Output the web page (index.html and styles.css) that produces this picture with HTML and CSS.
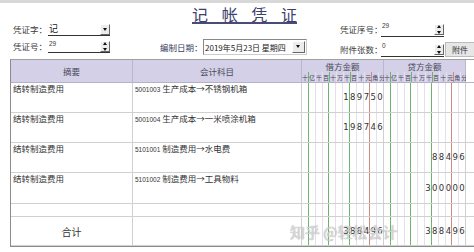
FILE: index.html
```html
<!DOCTYPE html>
<html lang="zh-CN">
<head>
<meta charset="UTF-8">
<title>记帐凭证</title>
<link rel="stylesheet" href="styles.css">
</head>
<body>
<div class="topbar"></div>

<div class="head">
    <!-- 左边：凭证字 / 凭证号 -->
    <div class="col-left">
        <div class="field">
            <label>凭证字：</label>
            <div class="combo"><span class="val big">记</span><i class="btn drop"></i></div>
        </div>
        <div class="field">
            <label>凭证号：</label>
            <div class="combo"><span class="val">29</span><i class="btn spin"></i></div>
        </div>
    </div>

    <!-- 中间：标题 + 日期 -->
    <div class="col-mid">
        <h1 class="title"><span>记</span><span>帐</span><span>凭</span><span>证</span></h1>
        <div class="field date-field">
            <label>编制日期：</label>
            <div class="select">2019年5月23日&nbsp;星期四<i class="btn drop"></i></div>
        </div>
    </div>

    <!-- 右边：凭证序号 / 附件张数 -->
    <div class="col-right">
        <div class="field">
            <label>凭证序号：</label>
            <div class="combo wide"><span class="val">29</span><i class="btn spin"></i></div>
        </div>
        <div class="field">
            <label>附件张数：</label>
            <div class="combo wide"><span class="val">0</span><i class="btn spin"></i></div>
            <button class="attach">附件</button>
        </div>
    </div>
</div>

<div class="voucher">
    <div class="th">摘要</div>
    <div class="th">会计科目</div>
    <div class="th amt-head">
        <div class="amt-title">借方金额</div>
        <div class="amt units"></div>
    </div>
    <div class="th amt-head">
        <div class="amt-title">贷方金额</div>
        <div class="amt units"></div>
    </div>
    <div class="th edge"></div>

    <div class="td">结转制造费用</div>
    <div class="td"><small>5001003</small> 生产成本→不锈钢机箱</div>
    <div class="td amt" data-v="189750"></div>
    <div class="td amt" data-v=""></div>
    <div class="td edge"></div>

    <div class="td">结转制造费用</div>
    <div class="td"><small>5001004</small> 生产成本→一米喷涂机箱</div>
    <div class="td amt" data-v="198746"></div>
    <div class="td amt" data-v=""></div>
    <div class="td edge"></div>

    <div class="td">结转制造费用</div>
    <div class="td"><small>5101001</small> 制造费用→水电费</div>
    <div class="td amt" data-v=""></div>
    <div class="td amt" data-v="88496"></div>
    <div class="td edge"></div>

    <div class="td">结转制造费用</div>
    <div class="td"><small>5101002</small> 制造费用→工具物料</div>
    <div class="td amt" data-v=""></div>
    <div class="td amt" data-v="300000"></div>
    <div class="td edge"></div>

    <div class="td"></div>
    <div class="td"></div>
    <div class="td amt" data-v=""></div>
    <div class="td amt" data-v=""></div>
    <div class="td edge"></div>

    <div class="td total">合计</div>
    <div class="td"></div>
    <div class="td amt" data-v="388496"></div>
    <div class="td amt" data-v="388496"></div>
    <div class="td edge"></div>
</div>

<div class="watermark">知乎 @轻松会计</div>

<script>
/* 金额格子：12 位，右对齐 */
const units = '十亿千百十万千百十元角分';
document.querySelectorAll('.amt.units').forEach(el => {
    [...units].forEach(u => {
        const s = document.createElement('span');
        s.textContent = u;
        el.appendChild(s);
    });
});
document.querySelectorAll('.amt[data-v]').forEach(el => {
    const v = el.dataset.v;
    const pad = 12 - v.length;
    for (let i = 0; i < 12; i++) {
        const s = document.createElement('span');
        s.textContent = i >= pad ? v[i - pad] : '';
        el.appendChild(s);
    }
});
</script>
</body>
</html>
```

FILE: styles.css
```css
body {
    margin: 0; width: 474px; height: 252px; overflow: hidden;
    position: relative; background: #fff; color: #3a3a3a;
    font-family: "Noto Sans CJK SC", "Liberation Sans", sans-serif;
}
.topbar { height: 3px; background: #d8d8d8; }

/* ---------- kop ---------- */
.head {
    display: grid; grid-template-columns: 160px 170px 1fr;
    height: 56px;
}
.field { display: flex; align-items: center; }
.field label { font-size: 8.5px; line-height: 13px; white-space: nowrap; }

.col-left {
    display: flex; flex-direction: column; gap: 4px;
    padding: 20px 0 0 13px;
}
.col-left .field { height: 13px; }
.col-left label { width: 35px; }

.combo {
    box-sizing: border-box; width: 62px; height: 13px;
    display: flex; align-items: center; justify-content: space-between;
    border-bottom: 1px solid #333; padding-left: 1px;
}
.combo.wide { width: 63px; height: 15px; }
.val { font-size: 6.5px; line-height: 8px; align-self: flex-start; font-family: "Liberation Sans", sans-serif; }
.val.big { font-size: 9px; line-height: 11px; font-family: "Noto Sans CJK SC", sans-serif; color: #222; }

.btn {
    box-sizing: border-box; width: 10px; height: 11px; position: relative;
    background: #ececec; border: 1px solid; border-color: #fff #666 #666 #fff;
}
.btn.drop::after {
    content: ""; position: absolute; left: 2px; top: 3px;
    border: 2.5px solid transparent; border-top: 3px solid #111; border-bottom: 0;
}
.btn.spin::before, .btn.spin::after {
    content: ""; position: absolute; left: 2px;
    border: 2.5px solid transparent;
}
.btn.spin::before { top: 0; border-bottom: 3px solid #111; border-top: 0; }
.btn.spin::after { bottom: 0; border-top: 3px solid #111; border-bottom: 0; }

.col-mid { padding-top: 4px; }
.title {
    display: flex; justify-content: space-between;
    width: 105px; margin: 0 0 0 32px;
    font-size: 16px; line-height: 15px; font-weight: 400; color: #3d3f6e;
    border-bottom: 2px solid #4a4c78;
}
.date-field { margin-top: 15px; }
.date-field label { width: 43px; color: #34405e; }
.select {
    box-sizing: border-box; width: 104px; height: 16px;
    display: flex; align-items: center; justify-content: space-between;
    border: 1px solid #888; border-right-color: #ccc; border-bottom-color: #ccc;
    padding-left: 1px; font-size: 8px; color: #222; white-space: nowrap;
}
.select .btn { width: 13px; height: 12px; margin-right: 1px; }
.select .btn.drop::after { left: 3px; }

.col-right {
    display: flex; flex-direction: column; gap: 5px;
    padding: 19px 0 0 10px;
}
.col-right .field { height: 15px; }
.col-right label { width: 41px; }
.attach {
    box-sizing: border-box; height: 15px; width: 30px; margin-left: 1px; padding: 0;
    background: #e6e6e6; border: 1px solid #bbb; color: #333;
    font-family: "Noto Sans CJK SC", sans-serif; font-size: 8px;
}

/* ---------- tabel ---------- */
.voucher {
    display: grid; margin-left: 10px;
    grid-template-columns: 122px 169px 82px 82px 1fr;
    grid-template-rows: 23px 30px 30px 30px 31px 13px 29px;
    border-left: 1px solid #8c8c8c; border-top: 1px solid #a0a0a0;
    border-bottom: 1px solid #8c8c8c;
}
.th, .td { box-sizing: border-box; border-bottom: 1px solid #d0d0d0; border-right: 1px solid #d0d0d0; }
.th {
    background: #d3d0e7; color: #4a4a5a; font-size: 8.5px;
    display: flex; align-items: center; justify-content: center;
    border-right-color: #bab6cf; border-bottom-color: #b5b1c9;
}
.td { font-size: 8.5px; line-height: 11px; padding: 0 2px; color: #333; }
.td small { font-family: "Liberation Sans", sans-serif; font-size: 6.5px; }
.td.total { display: flex; align-items: center; justify-content: center; font-size: 10px; }
.edge { border-right: 0; }
.th.edge { background: #fff; }

.amt-head { flex-direction: column; align-items: stretch; justify-content: flex-start; }
.amt-title { height: 12px; line-height: 13px; text-align: center; }
.amt {
    display: grid; grid-template-columns: repeat(12, 1fr);
    padding: 0; border-right: 0;
}
.amt span {
    display: flex; align-items: center; justify-content: center;
    border-right: 1px solid #e4e0ea;
    font-family: "DejaVu Sans", sans-serif; font-size: 8.5px; color: #333;
}
.amt span:nth-child(1), .amt span:nth-child(4), .amt span:nth-child(7) { border-right-color: #6db56d; }
.amt span:nth-child(10) { border-right-color: #cf8a80; }
.amt span:nth-child(12) { border-right-color: #cfcfcf; }
.amt.units { height: 11px; }
.amt.units span { font-family: "Noto Sans CJK SC", sans-serif; font-size: 6px; color: #4a4a5a; }

.watermark {
    position: absolute; left: 290px; top: 221px;
    font-size: 15px; color: rgba(235, 235, 235, 0.75);
    text-shadow: 0 0 1px rgba(110, 110, 110, 0.8);
    white-space: nowrap;
}
```
